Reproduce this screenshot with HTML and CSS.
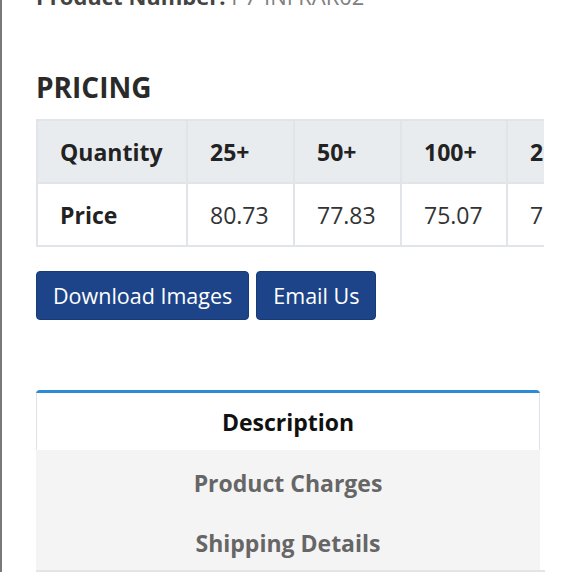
FILE: index.html
```html
<!DOCTYPE html>
<html>
<head>
<meta charset="utf-8">
<link rel="stylesheet" href="styles.css">
</head>
<body>
<div class="page">
  <p class="prodnum"><b>Product Number:</b> P7-INFRAR02</p>
  <h2 class="heading">PRICING</h2>
  <div class="table-wrap">
    <table class="price-table">
      <colgroup>
        <col class="c1"><col class="c2"><col class="c2"><col class="c3"><col class="c3">
      </colgroup>
      <thead>
        <tr><th>Quantity</th><th>25+</th><th>50+</th><th>100+</th><th>250+</th></tr>
      </thead>
      <tbody>
        <tr><th>Price</th><td>80.73</td><td>77.83</td><td>75.07</td><td>72.41</td></tr>
      </tbody>
    </table>
  </div>
  <div class="actions">
    <a class="btn">Download Images</a>
    <a class="btn">Email Us</a>
  </div>
  <div class="tabs-wrap">
    <ul class="tabs">
      <li class="tab active">Description</li>
      <li class="tab">Product Charges</li>
      <li class="tab">Shipping Details</li>
    </ul>
  </div>
</div>
</body>
</html>
```
FILE: styles.css
```css
html, body {
  margin: 0;
  padding: 0;
  background: #fff;
}
body {
  font-family: "Open Sans", "Liberation Sans", sans-serif;
  color: #333;
  overflow: hidden;
  height: 580px;
}
.page {
  border-left: 2px solid #7a7a7a;
  padding-left: 34px;
  min-height: 580px;
  box-sizing: border-box;
}
.prodnum {
  margin: -20px 0 0;
  font-size: 22px;
  line-height: 33px;
  color: #808080;
  white-space: nowrap;
}
.prodnum b {
  color: #444;
}
.heading {
  margin: 57px 0 15px;
  font-size: 28px;
  line-height: 34px;
  font-weight: 700;
  color: #2a2a2a;
}
.table-wrap {
  width: 508px;
  overflow: hidden;
}
.price-table {
  border-collapse: collapse;
  table-layout: fixed;
  width: 578px;
  font-size: 23px;
}
.c1 { width: 150px; }
.c2 { width: 107px; }
.c3 { width: 106px; }
.price-table th,
.price-table td {
  border: 2px solid #e1e4e8;
  height: 61px;
  padding: 0 0 0 22px;
  text-align: left;
  white-space: nowrap;
  line-height: 30px;
}
.price-table thead th {
  background: #e9ecef;
  font-weight: 700;
  color: #222;
}
.price-table tbody th {
  font-weight: 700;
  color: #222;
}
.price-table td {
  font-weight: 400;
  color: #333;
}
.actions {
  display: flex;
  gap: 7px;
  margin-top: 24px;
}
.btn {
  display: block;
  background: #1d4488;
  border: 1px solid #183b78;
  border-radius: 4px;
  color: #fff;
  font-size: 21.5px;
  line-height: 31px;
  padding: 8px 16px;
}
.tabs-wrap {
  margin-top: 70px;
  width: 509px;
  border-bottom: 2px solid #e4e4e4;
}
.tabs {
  list-style: none;
  margin: 0;
  padding: 0;
  width: 504px;
  border-top: 3px solid #2b8bd4;
  border-radius: 4px 4px 0 0;
  overflow: hidden;
}
.tab {
  height: 60px;
  box-sizing: border-box;
  padding-top: 5px;
  display: flex;
  align-items: center;
  justify-content: center;
  font-size: 23px;
  font-weight: 700;
  color: #666;
  background: #f4f4f4;
}
.tab.active {
  height: 57px;
  padding-top: 0;
  background: #fff;
  color: #111;
  border-left: 1px solid #dde3ea;
  border-right: 1px solid #dde3ea;
}
```
